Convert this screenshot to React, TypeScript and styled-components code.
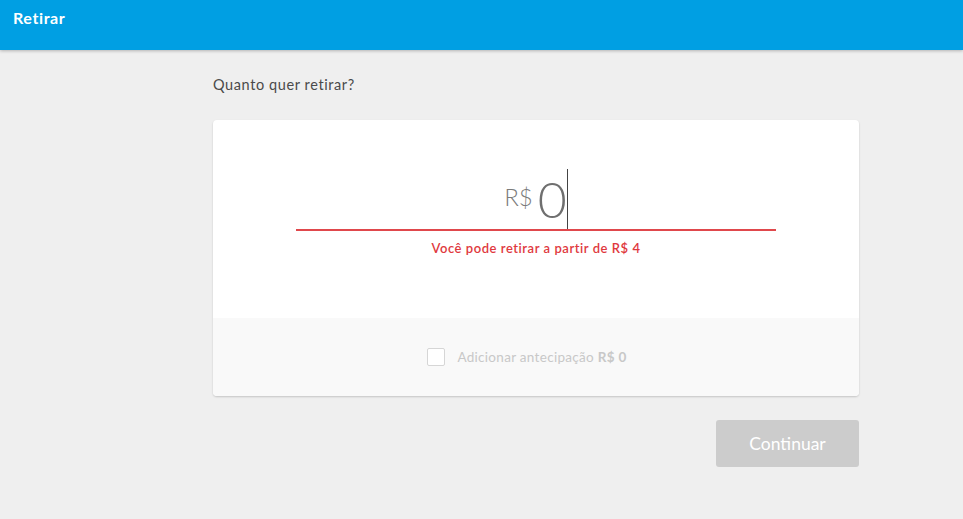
import React from "react";
import styled, { createGlobalStyle } from "styled-components";

const Global = createGlobalStyle`
  html, body { margin: 0; padding: 0; background: #efefef; }
  body { font-family: "Lato", "Open Sans", sans-serif; }
  * { box-sizing: border-box; }
`;

const Page = styled.div`
  min-height: 519px;
  background: #efefef;
`;

const Header = styled.header`
  height: 50px;
  background: #009fe3;
  box-shadow: 0 1px 3px rgba(0, 0, 0, 0.25);
  padding: 9px 13px;
  color: #fff;
  font-weight: 700;
  font-size: 16px;
  line-height: 18px;
  letter-spacing: 0.6px;
`;

const Main = styled.main`
  width: 646px;
  padding-top: 25px;
  display: flex;
  flex-direction: column;
  margin-left: 213px;
`;

const Question = styled.p`
  margin: 0 0 25px;
  font-size: 14.5px;
  line-height: 20px;
  color: #4a4a4a;
  letter-spacing: 0.6px;
`;

const Card = styled.section`
  background: #fff;
  border-radius: 4px;
  box-shadow: 0 1px 2px rgba(0, 0, 0, 0.18);
  overflow: hidden;
`;

const AmountArea = styled.div`
  height: 198px;
  display: flex;
  flex-direction: column;
  align-items: center;
  padding-top: 50px;
`;

const AmountRow = styled.div`
  width: 480px;
  height: 61px;
  border-bottom: 2px solid #e0484c;
  display: flex;
  justify-content: center;
  align-items: flex-end;
`;

const Currency = styled.span`
  font-weight: 300;
  font-size: 24px;
  color: #7b7b7b;
  line-height: 30px;
  margin-bottom: 17px;
  margin-right: 5px;
`;

const Value = styled.span`
  font-weight: 300;
  font-size: 50px;
  line-height: 56px;
  color: #6f6f6f;
  margin-bottom: 2px;
`;

const Caret = styled.span`
  width: 1px;
  height: 60px;
  background: #444;
`;

const ErrorText = styled.p`
  margin: 9px 0 0;
  font-size: 13px;
  line-height: 16px;
  color: #e0393e;
  font-weight: 600;
  letter-spacing: 0.55px;
`;

const Footer = styled.div`
  height: 78px;
  background: #f9f9f9;
  display: flex;
  align-items: center;
  justify-content: center;
  gap: 12px;
  padding-right: 18px;
  color: #c8c8c8;
  font-size: 13.5px;
  letter-spacing: 0.3px;
`;

const Check = styled.span`
  width: 18px;
  height: 18px;
  border: 1px solid #d6d6d6;
  border-radius: 2px;
  background: #fff;
`;

const Strong = styled.b`
  font-weight: 700;
`;

const Actions = styled.div`
  display: flex;
  justify-content: flex-end;
  margin-top: 24px;
`;

const Button = styled.button`
  width: 143px;
  height: 47px;
  border: none;
  border-radius: 3px;
  background: #cccccc;
  color: #fff;
  font-family: "Lato", sans-serif;
  font-size: 17.5px;
`;

export default function App() {
  return (
    <Page>
      <Global />
      <Header>Retirar</Header>
      <Main>
        <Question>Quanto quer retirar?</Question>
        <Card>
          <AmountArea>
            <AmountRow>
              <Currency>R$</Currency>
              <Value>0</Value>
              <Caret />
            </AmountRow>
            <ErrorText>Você pode retirar a partir de R$ 4</ErrorText>
          </AmountArea>
          <Footer>
            <Check />
            <span>
              Adicionar antecipação <Strong>R$ 0</Strong>
            </span>
          </Footer>
        </Card>
        <Actions>
          <Button disabled>Continuar</Button>
        </Actions>
      </Main>
    </Page>
  );
}
